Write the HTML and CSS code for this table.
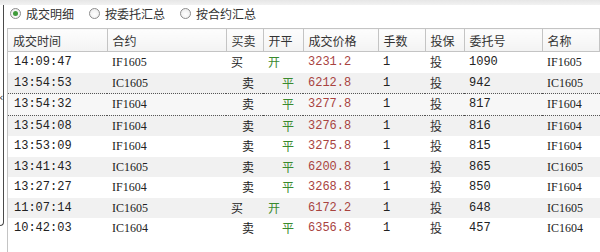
FILE: index.html
```html
<!DOCTYPE html>
<html lang="zh-CN">
<head>
  <meta charset="UTF-8">
  <title>成交明细</title>
  <link rel="stylesheet" href="styles.css">
</head>
<body>

<div class="topbar"></div>

<div class="frame">
  <div class="splitter"><span class="grip">&lsaquo;</span></div>

  <div class="main">
    <div class="modes">
      <label class="mode"><span class="radio on"></span>成交明细</label>
      <label class="mode"><span class="radio"></span>按委托汇总</label>
      <label class="mode"><span class="radio"></span>按合约汇总</label>
    </div>

    <div class="grid">
      <table class="deals">
        <colgroup>
          <col style="width:99px">
          <col style="width:119px">
          <col style="width:37px">
          <col style="width:40px">
          <col style="width:75px">
          <col style="width:47px">
          <col style="width:39px">
          <col style="width:78px">
          <col>
        </colgroup>
        <thead>
          <tr>
            <th>成交时间</th>
            <th>合约</th>
            <th>买卖</th>
            <th>开平</th>
            <th>成交价格</th>
            <th>手数</th>
            <th>投保</th>
            <th>委托号</th>
            <th>名称</th>
          </tr>
        </thead>
        <tbody>
          <tr>
            <td class="num">14:09:47</td><td class="code">IF1605</td>
            <td class="side buy">买</td><td class="oc buy">开</td>
            <td class="num price">3231.2</td><td class="num">1</td><td class="cn">投</td>
            <td class="num">1090</td><td class="code">IF1605</td>
          </tr>
          <tr class="alt">
            <td class="num">13:54:53</td><td class="code">IC1605</td>
            <td class="side sell">卖</td><td class="oc sell">平</td>
            <td class="num price">6212.8</td><td class="num">1</td><td class="cn">投</td>
            <td class="num">942</td><td class="code">IC1605</td>
          </tr>
          <tr class="focus">
            <td class="num">13:54:32</td><td class="code">IF1604</td>
            <td class="side sell">卖</td><td class="oc sell">平</td>
            <td class="num price">3277.8</td><td class="num">1</td><td class="cn">投</td>
            <td class="num">817</td><td class="code">IF1604</td>
          </tr>
          <tr class="alt">
            <td class="num">13:54:08</td><td class="code">IF1604</td>
            <td class="side sell">卖</td><td class="oc sell">平</td>
            <td class="num price">3276.8</td><td class="num">1</td><td class="cn">投</td>
            <td class="num">816</td><td class="code">IF1604</td>
          </tr>
          <tr>
            <td class="num">13:53:09</td><td class="code">IF1604</td>
            <td class="side sell">卖</td><td class="oc sell">平</td>
            <td class="num price">3275.8</td><td class="num">1</td><td class="cn">投</td>
            <td class="num">815</td><td class="code">IF1604</td>
          </tr>
          <tr class="alt">
            <td class="num">13:41:43</td><td class="code">IC1605</td>
            <td class="side sell">卖</td><td class="oc sell">平</td>
            <td class="num price">6200.8</td><td class="num">1</td><td class="cn">投</td>
            <td class="num">865</td><td class="code">IC1605</td>
          </tr>
          <tr>
            <td class="num">13:27:27</td><td class="code">IF1604</td>
            <td class="side sell">卖</td><td class="oc sell">平</td>
            <td class="num price">3268.8</td><td class="num">1</td><td class="cn">投</td>
            <td class="num">850</td><td class="code">IF1604</td>
          </tr>
          <tr class="alt">
            <td class="num">11:07:14</td><td class="code">IC1605</td>
            <td class="side buy">买</td><td class="oc buy">开</td>
            <td class="num price">6172.2</td><td class="num">1</td><td class="cn">投</td>
            <td class="num">648</td><td class="code">IC1605</td>
          </tr>
          <tr>
            <td class="num">10:42:03</td><td class="code">IC1604</td>
            <td class="side sell">卖</td><td class="oc sell">平</td>
            <td class="num price">6356.8</td><td class="num">1</td><td class="cn">投</td>
            <td class="num">457</td><td class="code">IC1604</td>
          </tr>
        </tbody>
      </table>
    </div>
  </div>
</div>

</body>
</html>
```

FILE: styles.css
```css
html, body {
  height: 100%;
}
body {
  margin: 0;
  padding: 0;
  background: #fff;
  color: #222;
  font-family: "Noto Sans CJK SC", "Liberation Sans", sans-serif;
  font-size: 12px;
  overflow: hidden;
}
.topbar {
  height: 5px;
  background: linear-gradient(#e6e6e6, #f2f2f2);
}
.frame {
  display: flex;
  height: calc(100% - 5px);
}
.splitter {
  width: 3px;
  height: 220px;
  border-right: 1px solid #4a4a4a;
  border-bottom: 1px solid #4a4a4a;
  border-bottom-right-radius: 4px;
  display: flex;
  flex-direction: column;
  overflow: visible;
}
.grip {
  margin-top: 87px;
  margin-left: -1px;
  font-family: "DejaVu Sans", sans-serif;
  font-size: 11px;
  line-height: 12px;
  color: #333;
}
.main {
  flex: 1;
  padding-left: 3px;
  display: flex;
  flex-direction: column;
  min-width: 0;
}
.modes {
  height: 17px;
  display: flex;
  align-items: center;
  padding-left: 3px;
  color: #333;
}
.mode {
  display: flex;
  align-items: center;
  gap: 5px;
  margin-right: 15px;
  line-height: 14px;
}
.radio {
  box-sizing: border-box;
  width: 11px;
  height: 11px;
  border: 1px solid #8c8c8c;
  border-radius: 50%;
  background: radial-gradient(circle at 50% 60%, #fff, #e8e8e8);
  display: flex;
  align-items: center;
  justify-content: center;
}
.radio.on::after {
  content: "";
  width: 5px;
  height: 5px;
  border-radius: 50%;
  background: #3f9a3a;
}
.grid {
  flex: 1;
  margin-top: 6px;
  border-left: 1px solid #c4c4c4;
  overflow: hidden;
}
.deals {
  width: 100%;
  table-layout: fixed;
  border-collapse: collapse;
}
.deals th {
  height: 22px;
  padding: 0 5px;
  text-align: left;
  font-weight: normal;
  color: #333;
  background: linear-gradient(#fdfdfd, #f3f3f3);
  border-top: 1px solid #c4c4c4;
  border-bottom: 1px solid #c4c4c4;
  border-right: 1px solid #c4c4c4;
  white-space: nowrap;
}
.deals td {
  height: 20.5px;
  padding: 0 5px;
  white-space: nowrap;
  line-height: 14px;
}
.deals tr.alt td {
  background: #f1f1f1;
}
.deals tr.focus td {
  border-top: 1px dotted #555;
  border-bottom: 1px dotted #555;
  background: #f7f7f7;
}
.num {
  font-family: "Liberation Mono", monospace;
  font-size: 12px;
  color: #222;
}
td.num:first-child {
  padding-left: 6px;
}
.code {
  font-family: "Liberation Serif", serif;
  font-size: 12px;
  color: #222;
}
.price {
  color: #a8433f;
}
.cn {
  color: #333;
}
.side.buy {
  text-align: left;
}
.side.sell {
  text-align: right;
  padding-right: 9px;
}
.oc {
  color: #3a8a2e;
}
.oc.buy {
  text-align: left;
}
.oc.sell {
  text-align: right;
  padding-right: 9px;
}
```
